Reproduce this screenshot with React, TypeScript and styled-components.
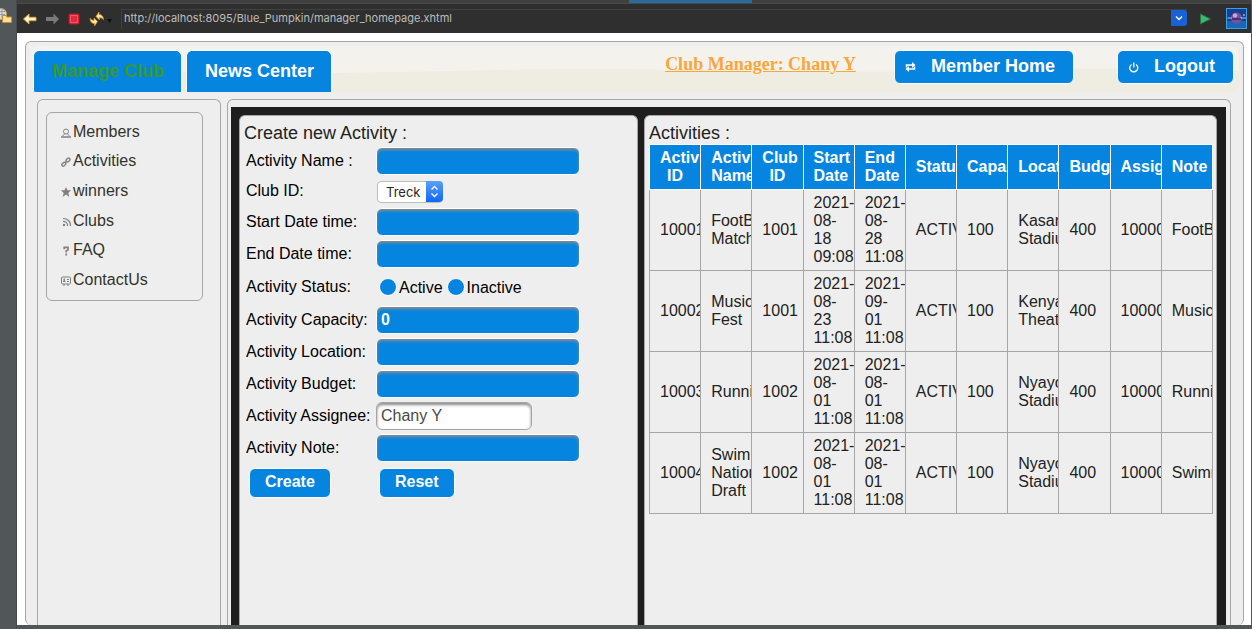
import React from 'react';
import styled, { createGlobalStyle } from 'styled-components';

const BLUE = '#0585df';
const PANEL = '#eeeeee';
const LINE = '#a6a6a6';
const SANS = '"Liberation Sans", Arial, sans-serif';
const UI = 'Inter, "Liberation Sans", sans-serif';

const GlobalStyle = createGlobalStyle`
  *, *::before, *::after { box-sizing: border-box; }
  body { margin: 0; background: #515658; font: 16px/18px ${SANS}; color: #222222; }
  ul { list-style: none; margin: 0; padding: 0; }
  h2 { margin: 0; font-weight: normal; }
`;

const Workbench = styled.div`
  display: grid;
  grid-template-columns: 17px minmax(0, 1fr);
  height: 100vh;
  overflow: hidden;
  background: #515658;
`;

const TrimBar = styled.aside`
  padding-top: 8px;
  border-right: 1px solid #45494b;
  svg { display: block; }
`;

const Editor = styled.div`
  display: flex;
  flex-direction: column;
  min-width: 0;
  padding-bottom: 4px;
  border-right: 1px solid #55585a;
`;

const TabStrip = styled.div`
  flex: none;
  height: 4px;
  padding-left: 612px;
  background: #404041;
  border-bottom: 1px solid #4a4a4b;
`;

const ActiveTab = styled.div`
  width: 123px;
  height: 3px;
  background: #2a6a9b;
`;

const Toolbar = styled.div`
  flex: none;
  display: flex;
  align-items: center;
  height: 29px;
  padding: 0 4px 0 5px;
  background: #2f2f2f;
`;

const ToolButton = styled.button<{ $width: number }>`
  flex: none;
  display: flex;
  align-items: center;
  width: ${(p) => p.$width}px;
  height: 22px;
  padding: 0;
  border: 0;
  background: none;
  svg { display: block; }
`;

const AddressBox = styled.div`
  flex: 1;
  display: flex;
  height: 20px;
  min-width: 0;
  margin-right: 12px;
  padding-bottom: 3px;
  border: 1px solid #414141;
  border-width: 1px 0 0 1px;
`;

const Address = styled.input`
  flex: 1;
  min-width: 0;
  padding: 0 2px;
  border: 0;
  outline: 0;
  background: transparent;
  color: #bdbdbd;
  font: 11px/16px ${UI};
`;

const AddressMenu = styled.button`
  flex: none;
  display: flex;
  align-items: center;
  justify-content: center;
  width: 16px;
  height: 16px;
  padding: 0;
  border: 0;
  border-radius: 0 3px 3px 0;
  background: #1862d6;
`;

const Page = styled.main`
  flex: 1;
  display: flex;
  min-height: 0;
  padding: 8px 7px 0 8px;
  background: #ffffff;
`;

const Frame = styled.div`
  flex: 1;
  display: flex;
  flex-direction: column;
  min-width: 0;
  padding: 4px 4px 0;
  border: 1px solid ${LINE};
  border-bottom: 0;
  border-radius: 6px;
  background: ${PANEL};
`;

const Header = styled.header`
  position: relative;
  flex: none;
  display: flex;
  align-items: flex-start;
  height: 46px;
  padding: 4px 5px 0 3px;
  border-radius: 6px;
  overflow: hidden;
  background: #efece1;
`;

const Wave = styled.svg`
  position: absolute;
  inset: 0;
  width: 100%;
  height: 100%;
`;

const Tabs = styled.nav`
  position: relative;
  display: flex;
  gap: 4px;
`;

const Tab = styled.a<{ $active?: boolean }>`
  padding: 11px 17px 12px 18px;
  border: 1px solid #ffffff;
  border-bottom: 0;
  border-radius: 6px 6px 0 0;
  background: ${BLUE};
  color: ${(p) => (p.$active ? '#359a2e' : '#ffffff')};
  font-size: 18px;
  line-height: 18px;
  font-weight: bold;
  text-decoration: none;
`;

const Account = styled.div`
  position: relative;
  flex: 1;
  display: flex;
  justify-content: flex-end;
`;

const ManagerLink = styled.a`
  margin: 4px 38px 0 0;
  color: #fba63c;
  font: bold 18px/20px "Liberation Serif", "Times New Roman", serif;
`;

const HeaderButton = styled.button<{ $gap?: number }>`
  display: flex;
  align-items: center;
  gap: 14px;
  height: 34px;
  margin-right: ${(p) => p.$gap || 0}px;
  padding: 0 18px 2px 9px;
  border: 1px solid #ffffff;
  border-radius: 6px;
  background: ${BLUE};
  color: #ffffff;
  font: bold 18px/20px ${SANS};
  svg { flex: none; margin-top: 2px; }
`;

const Columns = styled.div`
  flex: 1;
  display: grid;
  grid-template-columns: 184px minmax(0, 1fr);
  gap: 6px;
  min-height: 0;
  padding: 7px 8px 0 7px;
`;

const Panel = styled.section`
  min-width: 0;
  border: 1px solid ${LINE};
  border-bottom: 0;
  border-radius: 6px 6px 0 0;
`;

const Sidebar = styled(Panel)`
  padding: 12px 17px 0 8px;
`;

const Content = styled(Panel)`
  display: flex;
  padding: 7px 4px 0 3px;
`;

const Menu = styled.ul`
  display: grid;
  grid-auto-rows: 1fr;
  height: 189px;
  padding: 4px 0 5px 14px;
  border: 1px solid ${LINE};
  border-radius: 6px;
`;

const MenuLink = styled.a`
  display: flex;
  align-items: center;
  gap: 2px;
  height: 100%;
  color: #33332b;
  text-decoration: none;
  svg { flex: none; margin-top: 2px; }
`;

const Board = styled.div`
  flex: 1;
  display: grid;
  grid-template-columns: 399px minmax(0, 1fr);
  gap: 6px;
  min-width: 0;
  padding: 8px 9px 0 8px;
  background: #1e1e1e;
`;

const Card = styled.section`
  min-width: 0;
  padding: 7px 3px 0 4px;
  border: 1px solid ${LINE};
  border-bottom: 0;
  border-radius: 6px 6px 0 0;
  background: ${PANEL};
`;

const CardTitle = styled.h2`
  font-size: 18px;
  line-height: 20px;
`;

const Form = styled.form`
  padding: 2px 2px 0;
  color: #000000;
`;

const Row = styled.div<{ $height?: number }>`
  display: grid;
  grid-template-columns: 130px minmax(0, 1fr);
  align-items: center;
  height: ${(p) => p.$height || 32}px;
`;

const Label = styled.label`
  padding-bottom: 1px;
`;

const Field = styled.input`
  width: 204px;
  height: 28px;
  padding: 2px 4px 3px;
  border: 1px solid #ffffff;
  border-radius: 6px;
  outline: 0;
  background: ${BLUE};
  box-shadow: inset 0 2px 3px #8a8a8a;
  color: #ffffff;
  font: bold 16px/20px ${SANS};
`;

const PlainField = styled(Field)`
  width: 156px;
  border-color: ${LINE};
  background: #ffffff;
  color: #4a4a46;
  font-weight: normal;
`;

const SelectBox = styled.div`
  position: relative;
  width: 66px;
  height: 22px;
  margin-left: 1px;
`;

const Select = styled.select`
  appearance: none;
  width: 100%;
  height: 100%;
  padding: 0 18px 0 8px;
  border: 1px solid #bcbcbc;
  border-radius: 4px;
  background: #ffffff;
  color: #262626;
  font: 13px/18px ${UI};
`;

const Stepper = styled.span`
  position: absolute;
  top: 0;
  right: 0;
  display: flex;
  align-items: center;
  justify-content: center;
  width: 17px;
  height: 21px;
  border-radius: 0 4px 4px 0;
  background: linear-gradient(#5c9ff6, #0f68f5);
  pointer-events: none;
`;

const Choices = styled.div`
  display: flex;
  gap: 4px;
  padding: 2px 0 0 3px;
`;

const Choice = styled.label`
  display: flex;
  align-items: center;
  gap: 2px;
`;

const Radio = styled.input`
  appearance: none;
  width: 18px;
  height: 18px;
  margin: 0 0 2px;
  border: 1px solid #ffffff;
  border-radius: 50%;
  background: ${BLUE};
`;

const FormButton = styled.button`
  justify-self: start;
  height: 30px;
  margin-left: 3px;
  padding: 0 15px 2px;
  border: 1px solid #ffffff;
  border-radius: 6px;
  background: ${BLUE};
  color: #ffffff;
  font: bold 16px/18px ${SANS};
`;

const Table = styled.table`
  width: 100%;
  table-layout: fixed;
  border-collapse: collapse;
  margin-top: 1px;
  th, td {
    padding: 4px 10px;
    overflow: hidden;
    border: 1px solid ${LINE};
  }
  th {
    border-color: #ffffff;
    background: ${BLUE};
    color: #ffffff;
  }
`;

type Mark = 'person' | 'link' | 'star' | 'feed' | 'help' | 'contact';

const marks: Record<Mark, React.ReactNode> = {
  person: (
    <g fill="none" stroke="#808080">
      <circle cx="5" cy="3.500" r="2.500" />
      <path d="M3.500 6 1.500 8M6.500 6 8.500 8" />
      <path d="M0 9h10" strokeWidth="1.500" />
    </g>
  ),
  link: (
    <g fill="none" stroke="#808080" strokeWidth="1.400">
      <rect x="-2.200" y="-1.400" width="4.400" height="2.800" rx="1.400" transform="translate(7 3) rotate(-45)" />
      <rect x="-2.200" y="-1.400" width="4.400" height="2.800" rx="1.400" transform="translate(2.800 7.200) rotate(-45)" />
      <path d="M4 6 6 4" />
    </g>
  ),
  star: <path fill="#808080" d="M5 0 6.500 3.300H10L7.300 5.900 8.400 10 5 7.600 1.600 10 2.700 5.900 0 3.300H3.500Z" />,
  feed: (
    <g fill="none" stroke="#808080" strokeWidth="1.200">
      <circle cx="3" cy="8" r=".6" />
      <path d="M2 4.500A4 4 0 0 1 6.500 9M2 1.500A7 7 0 0 1 9.500 9" />
    </g>
  ),
  help: (
    <g fill="none" stroke="#808080" strokeWidth="1.700">
      <path d="M3.200 3.200V1.400H7V3.800L5.200 5V6.500M5.200 7.600V9.400" />
    </g>
  ),
  contact: (
    <g fill="none" stroke="#808080">
      <rect x=".5" y="1" width="9" height="7" rx="1" />
      <path d="M2 5.500H4.500M6 3.500H8M6 5.500H8M2 9H4M6 9H8" />
      <path d="M3.200 2.500V5" strokeWidth="1.500" />
    </g>
  ),
};

const menuItems: { text: string; mark: Mark }[] = [
  { text: 'Members', mark: 'person' },
  { text: 'Activities', mark: 'link' },
  { text: 'winners', mark: 'star' },
  { text: 'Clubs', mark: 'feed' },
  { text: 'FAQ', mark: 'help' },
  { text: 'ContactUs', mark: 'contact' },
];

const headings = [
  'Activity ID', 'Activity Name', 'Club ID', 'Start Date', 'End Date', 'Status',
  'Capacity', 'Location', 'Budget', 'Assignee', 'Note',
];

const activities = [
  ['10001', 'FootBall Match', '1001', '2021-08-18 09:08', '2021-08-28 11:08', 'ACTIVE', '100', 'Kasarani Stadium', '400', '10000', 'FootBall'],
  ['10002', 'Music Fest', '1001', '2021-08-23 11:08', '2021-09-01 11:08', 'ACTIVE', '100', 'Kenyatta Theatre', '400', '10000', 'Music'],
  ['10003', 'Running', '1002', '2021-08-01 11:08', '2021-08-01 11:08', 'ACTIVE', '100', 'Nyayo Stadium', '400', '10000', 'Running'],
  ['10004', 'Swimming National Draft', '1002', '2021-08-01 11:08', '2021-08-01 11:08', 'ACTIVE', '100', 'Nyayo Stadium', '400', '10000', 'Swimming'],
];

function TextRow({ id, label, value = '' }: { id: string; label: string; value?: string }) {
  return (
    <Row>
      <Label htmlFor={id}>{label}</Label>
      <Field id={id} defaultValue={value} />
    </Row>
  );
}

function BrowserBar() {
  return (
    <Toolbar>
      <ToolButton $width={23} aria-label="Back">
        <svg width="16" height="14" viewBox="0 0 16 14">
          <path d="M1.500 7 7 2V5.300H14V8.700H7V12Z" fill="#fff6cf" stroke="#e3a03c" strokeLinejoin="round" />
        </svg>
      </ToolButton>
      <ToolButton $width={23} aria-label="Forward">
        <svg width="15" height="14" viewBox="0 0 15 14">
          <path d="M14 7 8.500 1.500V5H1V9H8.500V12.500Z" fill="#7b7b7b" />
        </svg>
      </ToolButton>
      <ToolButton $width={21} aria-label="Stop">
        <svg width="12" height="12" viewBox="0 0 12 12">
          <rect x="1" y="1" width="10" height="10" rx="1" fill="#e6283c" stroke="#c01629" />
          <rect x="2.500" y="2.500" width="7" height="7" fill="none" stroke="#f0566a" />
        </svg>
      </ToolButton>
      <ToolButton $width={32} aria-label="Refresh">
        <svg width="24" height="16" viewBox="0 0 24 16">
          <path d="M7 5.500 10 1V3.500Q14 3.500 14.500 8.500Q12.500 6.500 10.500 6.500V9Z" fill="#ffe9a0" stroke="#d88f2e" strokeWidth=".8" />
          <path d="M8.500 10.500 5.500 15V12.500Q1.500 12.500 1 7.500Q3 9.500 5 9.500V7Z" fill="#ffe9a0" stroke="#d88f2e" strokeWidth=".8" />
          <path d="M18 8h5l-2.500 3.500Z" fill="#0c0c0c" />
        </svg>
      </ToolButton>
      <AddressBox>
        <Address aria-label="Address" defaultValue="http://localhost:8095/Blue_Pumpkin/manager_homepage.xhtml" />
        <AddressMenu aria-label="Address history">
          <svg width="8" height="6" viewBox="0 0 8 6">
            <path d="M1 1.500 4 4.500 7 1.500" fill="none" stroke="#fff" strokeWidth="1.300" />
          </svg>
        </AddressMenu>
      </AddressBox>
      <ToolButton $width={27} aria-label="Go">
        <svg width="13" height="14" viewBox="0 0 13 14">
          <path d="M1.500 2 11.500 7 1.500 12Z" fill="#43b573" stroke="#217a46" />
        </svg>
      </ToolButton>
      <ToolButton $width={21} aria-label="Open in web browser">
        <svg width="21" height="21" viewBox="0 0 21 21">
          <rect x=".5" y=".5" width="20" height="20" fill="#163f91" stroke="#3aa0e6" />
          <rect x="1" y="13" width="19" height="7" fill="#1c66b8" />
          <circle cx="10.500" cy="10" r="5.500" fill="#72529e" />
          <circle cx="9" cy="7.500" r="2.200" fill="#c7a6d4" />
          <path d="M1.500 10H6M14 10H20" stroke="#b9bfe6" strokeWidth="1.200" />
          <path d="M6 11H15" stroke="#3a2560" strokeWidth="1.500" />
          <circle cx="18" cy="7" r=".8" fill="#fff" />
        </svg>
      </ToolButton>
    </Toolbar>
  );
}

function CreateForm() {
  return (
    <Card>
      <CardTitle>Create new Activity :</CardTitle>
      <Form onSubmit={(e) => e.preventDefault()}>
        <TextRow id="name" label="Activity Name :" />
        <Row $height={29}>
          <Label htmlFor="club">Club ID:</Label>
          <SelectBox>
            <Select id="club">
              <option>Treck</option>
            </Select>
            <Stepper>
              <svg width="9" height="13" viewBox="0 0 9 13" fill="none" stroke="#fff" strokeWidth="1.400">
                <path d="M1.500 4.500 4.500 1.500 7.500 4.500M1.500 8.500 4.500 11.500 7.500 8.500" />
              </svg>
            </Stepper>
          </SelectBox>
        </Row>
        <TextRow id="start" label="Start Date time:" />
        <TextRow id="end" label="End Date time:" />
        <Row $height={34}>
          <Label as="span">Activity Status:</Label>
          <Choices>
            <Choice><Radio type="radio" name="status" />Active</Choice>
            <Choice><Radio type="radio" name="status" />Inactive</Choice>
          </Choices>
        </Row>
        <TextRow id="capacity" label="Activity Capacity:" value="0" />
        <TextRow id="location" label="Activity Location:" />
        <TextRow id="budget" label="Activity Budget:" />
        <Row>
          <Label htmlFor="assignee">Activity Assignee:</Label>
          <PlainField id="assignee" defaultValue="Chany Y" />
        </Row>
        <TextRow id="note" label="Activity Note:" />
        <Row $height={38}>
          <FormButton type="submit">Create</FormButton>
          <FormButton type="reset">Reset</FormButton>
        </Row>
      </Form>
    </Card>
  );
}

export default function App() {
  return (
    <>
      <GlobalStyle />
      <Workbench>
        <TrimBar>
          <svg width="12" height="16" viewBox="0 0 12 16">
            <circle cx="1" cy="6" r="5.500" fill="#d5dde2" stroke="#c49a5a" />
            <path d="M0 3.500H5M0 6.500H5M2 1V10" stroke="#8c9daa" />
            <path d="M2.500 7.500H6L7 9H11.500V14.500H2.500Z" fill="#ffdf92" stroke="#c98a35" />
          </svg>
        </TrimBar>
        <Editor>
          <TabStrip><ActiveTab /></TabStrip>
          <BrowserBar />
          <Page>
            <Frame>
              <Header>
                <Wave viewBox="0 0 1209 46" preserveAspectRatio="none" aria-hidden="true">
                  <path d="M0 0H1209V25C1160 23 1080 22 1020 23S900 26 800 26S640 23 560 23S400 26 300 27S100 23 0 24Z" fill="#f4f2ec" />
                </Wave>
                <Tabs>
                  <Tab href="#manage" $active>Manage Club</Tab>
                  <Tab href="#news">News Center</Tab>
                </Tabs>
                <Account>
                  <ManagerLink href="#profile">Club Manager: Chany Y</ManagerLink>
                  <HeaderButton $gap={43}>
                    <svg width="13" height="10" viewBox="0 0 13 10">
                      <path d="M2.500 5.500V3H8.500M10.500 4.500V7H4.500" fill="none" stroke="#fff" strokeWidth="1.500" />
                      <path d="M8 0 11.500 3 8 6ZM5 4 1.500 7 5 10Z" fill="#fff" />
                    </svg>
                    Member Home
                  </HeaderButton>
                  <HeaderButton>
                    <svg width="13" height="11" viewBox="0 0 13 11" fill="none" stroke="#fff" strokeWidth="1.300">
                      <path d="M4.500 2.500A4 4 0 1 0 9 2.500M6.800 .5V5.500" />
                    </svg>
                    Logout
                  </HeaderButton>
                </Account>
              </Header>
              <Columns>
                <Sidebar>
                  <Menu>
                    {menuItems.map(({ text, mark }) => (
                      <li key={text}>
                        <MenuLink href={'#' + text}>
                          <svg width="10" height="10" viewBox="0 0 10 10">{marks[mark]}</svg>
                          {text}
                        </MenuLink>
                      </li>
                    ))}
                  </Menu>
                </Sidebar>
                <Content>
                  <Board>
                    <CreateForm />
                    <Card>
                      <CardTitle>Activities :</CardTitle>
                      <Table>
                        <thead>
                          <tr>{headings.map((h) => <th key={h} scope="col">{h}</th>)}</tr>
                        </thead>
                        <tbody>
                          {activities.map((row) => (
                            <tr key={row[0]}>
                              {row.map((cell, i) => <td key={i}>{cell}</td>)}
                            </tr>
                          ))}
                        </tbody>
                      </Table>
                    </Card>
                  </Board>
                </Content>
              </Columns>
            </Frame>
          </Page>
        </Editor>
      </Workbench>
    </>
  );
}
